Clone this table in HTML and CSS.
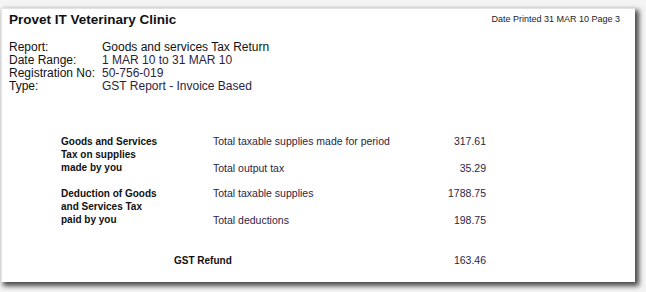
FILE: index.html
```html
<!DOCTYPE html>
<html>
<head>
<meta charset="utf-8">
<link rel="stylesheet" href="styles.css">
</head>
<body>
<div class="frame">
  <div class="card">
    <div class="head">
      <div class="clinic">Provet IT Veterinary Clinic</div>
      <div class="printed">Date Printed 31 MAR 10 Page 3</div>
    </div>
    <div class="info">
      <div class="lbl">Report:</div><div class="val strong">Goods and services Tax Return</div>
      <div class="lbl">Date Range:</div><div class="val">1 MAR 10 to 31 MAR 10</div>
      <div class="lbl">Registration No:</div><div class="val">50-756-019</div>
      <div class="lbl">Type:</div><div class="val">GST Report - Invoice Based</div>
    </div>
    <div class="gst">
      <div class="group">
        <div class="gname">Goods and Services<br>Tax on supplies<br>made by you</div>
        <div class="items">
          <div class="item"><span class="desc">Total taxable supplies made for period</span><span class="amt">317.61</span></div>
          <div class="item"><span class="desc">Total output tax</span><span class="amt">35.29</span></div>
        </div>
      </div>
      <div class="group">
        <div class="gname">Deduction of Goods<br>and Services Tax<br>paid by you</div>
        <div class="items">
          <div class="item"><span class="desc">Total taxable supplies</span><span class="amt">1788.75</span></div>
          <div class="item"><span class="desc">Total deductions</span><span class="amt">198.75</span></div>
        </div>
      </div>
      <div class="refund">
        <span class="rlabel">GST Refund</span><span class="amt">163.46</span>
      </div>
    </div>
  </div>
</div>
</body>
</html>
```
FILE: styles.css
```css
html, body {
  margin: 0;
  padding: 0;
  background: #f4f4f4;
}
body {
  width: 646px;
  height: 292px;
  overflow: hidden;
  font-family: "Liberation Sans", Arial, sans-serif;
  color: #1a1a1a;
}
.frame {
  padding: 8px 11px 10px 1px;
}
.card {
  background: #ffffff;
  height: 274px;
  box-sizing: border-box;
  border-top: 1px solid #e2e2e2;
  border-left: 1px solid #e6e6e6;
  box-shadow: 3px 3px 5px 1px rgba(0, 0, 0, 0.7);
  padding: 3px 15px 0 7px;
}
.head {
  display: flex;
  justify-content: space-between;
  align-items: flex-start;
}
.clinic {
  font-size: 13.5px;
  font-weight: bold;
  line-height: 16px;
  color: #111;
}
.printed {
  font-size: 9px;
  line-height: 12px;
  padding-top: 1px;
  color: #222;
}
.info {
  display: grid;
  grid-template-columns: 93px auto;
  margin-top: 13px;
  font-size: 12px;
  line-height: 13px;
}
.lbl {
  color: #111;
}
.val {
  color: #2c1e44;
}
.val.strong {
  color: #111;
}
.gst {
  margin-top: 42px;
  padding-left: 52px;
  font-size: 10.5px;
}
.group {
  display: flex;
  min-height: 40px;
  margin-bottom: 12px;
}
.gname {
  width: 152px;
  font-weight: bold;
  font-size: 10px;
  line-height: 13px;
  color: #111;
}
.items {
  display: flex;
  flex-direction: column;
  justify-content: space-between;
}
.item {
  display: flex;
  line-height: 13px;
}
.desc {
  width: 217px;
  color: #2c1e44;
}
.amt {
  width: 56px;
  text-align: right;
  color: #2c1e44;
}
.refund {
  display: flex;
  margin-top: 27px;
  line-height: 13px;
  padding-left: 113px;
}
.rlabel {
  width: 256px;
  font-weight: bold;
  font-size: 10px;
  color: #111;
}
```
